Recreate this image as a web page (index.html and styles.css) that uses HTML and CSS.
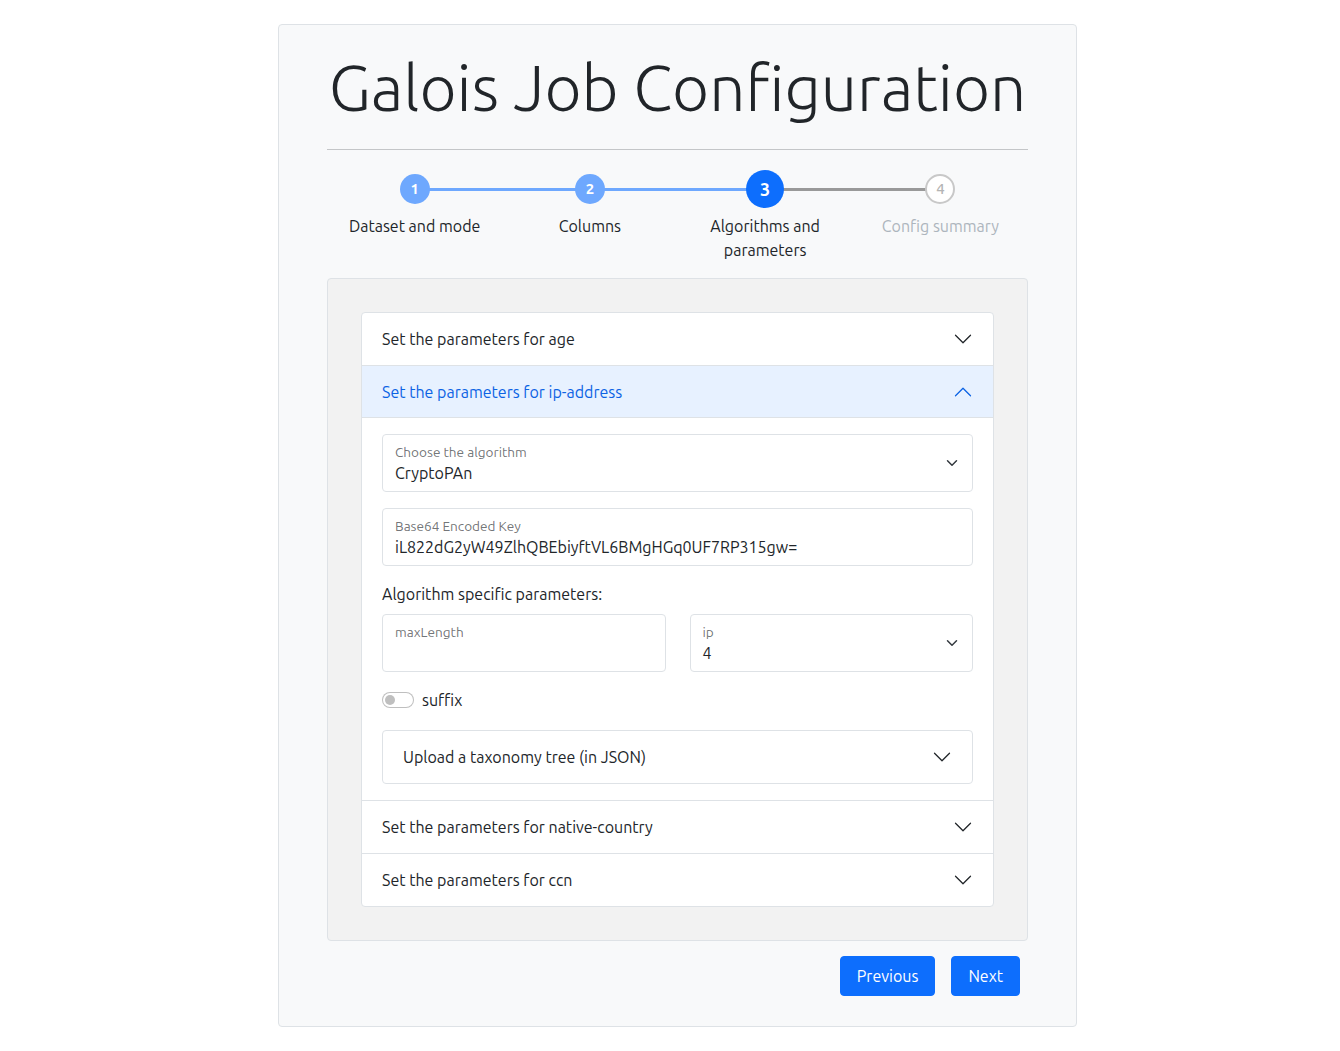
FILE: index.html
```html
<!DOCTYPE html>
<html lang="en">
<head>
<meta charset="utf-8">
<title>Galois Job Configuration</title>
<link rel="stylesheet" href="styles.css">
</head>
<body>
<main class="page">
  <h1 class="title">Galois Job Configuration</h1>
  <hr class="rule">
  <ol class="stepper">
    <li class="step done"><span class="dot">1</span><span class="step-label">Dataset and mode</span></li>
    <li class="step done"><span class="dot">2</span><span class="step-label">Columns</span></li>
    <li class="step current"><span class="dot">3</span><span class="step-label">Algorithms and<br>parameters</span></li>
    <li class="step todo"><span class="dot">4</span><span class="step-label">Config summary</span></li>
  </ol>
  <section class="panel">
    <div class="accordion">
      <div class="acc-item">
        <div class="acc-head"><span>Set the parameters for age</span><svg class="chev" viewBox="0 0 16 16"><path d="M2 5L8 11L14 5"/></svg></div>
      </div>
      <div class="acc-item">
        <div class="acc-head open"><span>Set the parameters for ip-address</span><svg class="chev" viewBox="0 0 16 16"><path d="M2 11L8 5L14 11"/></svg></div>
        <div class="acc-body">
          <div class="field select">
            <span class="f-label">Choose the algorithm</span>
            <span class="f-value">CryptoPAn</span>
            <svg class="sel-chev" viewBox="0 0 16 16"><path d="M2 5l6 6 6-6"/></svg>
          </div>
          <div class="field">
            <span class="f-label">Base64 Encoded Key</span>
            <span class="f-value">iL822dG2yW49ZlhQBEbiyftVL6BMgHGq0UF7RP315gw=</span>
          </div>
          <div class="sub-title">Algorithm specific parameters:</div>
          <div class="cols">
            <div class="field">
              <span class="f-label">maxLength</span>
              <span class="f-value"></span>
            </div>
            <div class="field select">
              <span class="f-label">ip</span>
              <span class="f-value">4</span>
              <svg class="sel-chev" viewBox="0 0 16 16"><path d="M2 5l6 6 6-6"/></svg>
            </div>
          </div>
          <div class="switch-row"><span class="switch"><span class="knob"></span></span><span>suffix</span></div>
          <div class="upload">
            <div class="acc-head"><span>Upload a taxonomy tree (in JSON)</span><svg class="chev" viewBox="0 0 16 16"><path d="M2 5L8 11L14 5"/></svg></div>
          </div>
        </div>
      </div>
      <div class="acc-item">
        <div class="acc-head"><span>Set the parameters for native-country</span><svg class="chev" viewBox="0 0 16 16"><path d="M2 5L8 11L14 5"/></svg></div>
      </div>
      <div class="acc-item">
        <div class="acc-head"><span>Set the parameters for ccn</span><svg class="chev" viewBox="0 0 16 16"><path d="M2 5L8 11L14 5"/></svg></div>
      </div>
    </div>
  </section>
  <div class="actions">
    <button class="btn">Previous</button>
    <button class="btn">Next</button>
  </div>
</main>
</body>
</html>
```
FILE: styles.css
```css
* { box-sizing: border-box; }
html, body { margin: 0; padding: 0; background: #fff; }
body {
  font-family: Ubuntu, "Open Sans", "Noto Sans", sans-serif;
  font-size: 16px;
  line-height: 24px;
  color: #212529;
}
.page {
  width: 799px;
  margin: 24px 0 25px 278px;
  background: #f8f9fa;
  border: 1px solid #dee2e6;
  border-radius: 4px;
  padding: 24px 48px 30px 48px;
}
.title {
  margin: 0;
  font-size: 64px;
  line-height: 77px;
  font-weight: 300;
  text-align: center;
  white-space: nowrap;
  color: #212529;
}
.rule {
  margin: 23px 0 20px;
  border: 0;
  border-top: 1px solid #c4c6c8;
  height: 0;
}
.stepper {
  list-style: none;
  margin: 0;
  padding: 0;
  display: grid;
  grid-template-columns: repeat(4, 1fr);
}
.step {
  position: relative;
  display: flex;
  flex-direction: column;
  align-items: center;
  text-align: center;
}
.step + .step::before {
  content: "";
  position: absolute;
  top: 18px;
  left: -50%;
  width: 100%;
  height: 3px;
  background: #6ea8fe;
  z-index: 0;
}
.step.todo::before { background: #999; }
.dot {
  position: relative;
  z-index: 1;
  margin: 4px 0;
  width: 30px;
  height: 30px;
  border-radius: 50%;
  display: flex;
  align-items: center;
  justify-content: center;
  font-weight: 700;
  font-size: 15px;
  color: #fff;
  background: #6ea8fe;
}
.step.current .dot {
  margin: 0;
  width: 38px;
  height: 38px;
  background: #0d6efd;
  font-size: 18px;
}
.step.todo .dot {
  background: #fff;
  border: 2px solid #c8c8c8;
  color: #b4b4b4;
  font-weight: 500;
}
.step-label {
  margin-top: 6px;
  font-size: 16px;
  line-height: 24px;
}
.step.todo .step-label { color: #adb5bd; }
.panel {
  margin-top: 16px;
  background: #f2f2f2;
  border: 1px solid #dee2e6;
  border-radius: 4px;
  padding: 33px;
}
.accordion {
  background: #fff;
  border: 1px solid #dee2e6;
  border-radius: 4px;
  overflow: hidden;
}
.acc-item + .acc-item { border-top: 1px solid #dee2e6; }
.acc-head {
  display: flex;
  align-items: center;
  justify-content: space-between;
  padding: 14px 20px;
  line-height: 24px;
  font-size: 16px;
  color: #212529;
}
.acc-head.open {
  background: #e7f1ff;
  color: #0c63e4;
  border-bottom: 1px solid #dee2e6;
  padding-bottom: 13px;
}
.chev {
  width: 20px;
  height: 20px;
  fill: none;
  stroke: #212529;
  stroke-width: 1;
  stroke-linecap: round;
  stroke-linejoin: round;
}
.open .chev { stroke: #0c63e4; }
.acc-body { padding: 16px 20px; }
.field {
  position: relative;
  display: flex;
  flex-direction: column;
  height: 58px;
  margin-bottom: 16px;
  padding: 8px 36px 5px 12px;
  background: #fff;
  border: 1px solid #dee2e6;
  border-radius: 4px;
}
.f-label {
  font-size: 13.6px;
  line-height: 18px;
  color: rgba(33, 37, 41, 0.65);
}
.f-value {
  font-size: 16px;
  line-height: 24px;
  min-height: 24px;
  color: #212529;
}
.sel-chev {
  position: absolute;
  right: 12px;
  top: 22px;
  width: 16px;
  height: 12px;
  fill: none;
  stroke: #343a40;
  stroke-width: 2;
  stroke-linecap: round;
  stroke-linejoin: round;
}
.sub-title { margin-bottom: 8px; }
.cols {
  display: grid;
  grid-template-columns: 1fr 1fr;
  column-gap: 24px;
}
.cols .field { margin-bottom: 0; }
.switch-row {
  display: flex;
  align-items: center;
  gap: 8px;
  margin-top: 16px;
  margin-bottom: 18px;
}
.switch {
  display: inline-flex;
  align-items: center;
  width: 32px;
  height: 16px;
  border: 1px solid rgba(0, 0, 0, 0.25);
  border-radius: 8px;
  padding: 0 2px;
  background: #fff;
}
.knob {
  width: 10px;
  height: 10px;
  border-radius: 50%;
  background: #bfbfbf;
}
.upload {
  border: 1px solid #dee2e6;
  border-radius: 4px;
}
.actions {
  display: flex;
  justify-content: flex-end;
  gap: 16px;
  margin-top: 15px;
  padding-right: 8px;
}
.btn {
  font-family: inherit;
  font-size: 16px;
  line-height: 24px;
  padding: 7px 16px;
  color: #fff;
  background: #0d6efd;
  border: 1px solid #0d6efd;
  border-radius: 4px;
}
```
